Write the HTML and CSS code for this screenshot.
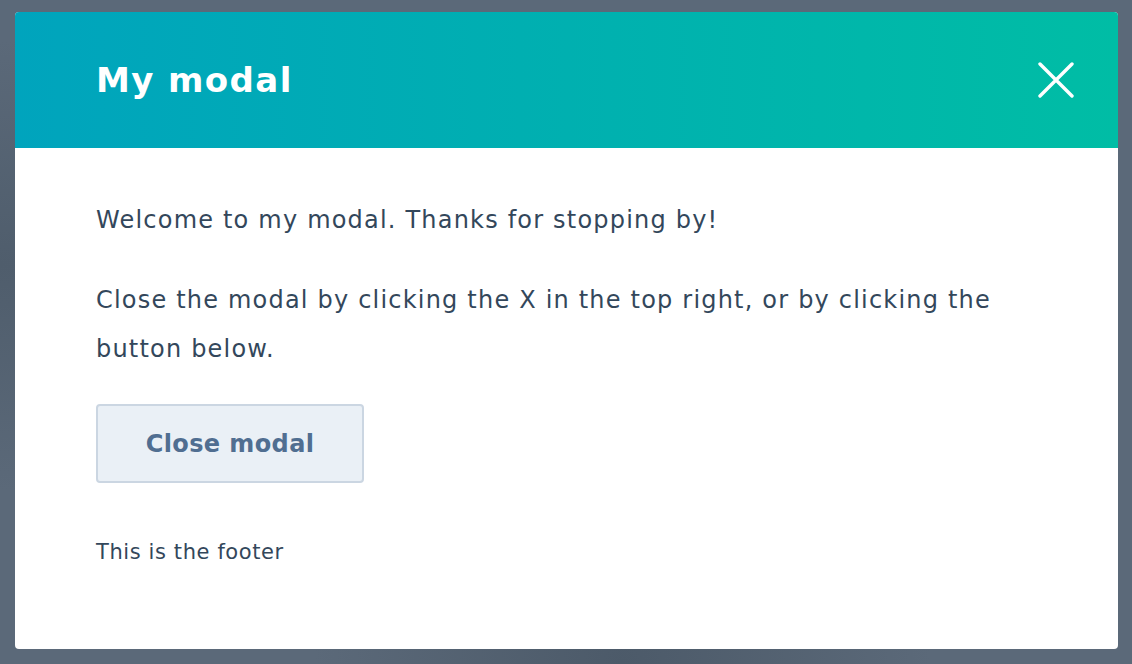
FILE: index.html
```html
<!DOCTYPE html>
<html lang="en">
<head>
<meta charset="utf-8">
<title>My modal</title>
<link rel="stylesheet" href="styles.css">
</head>
<body>
<div class="backdrop">
  <div class="modal">
    <div class="modal-header">
      <h1 class="modal-title">My modal</h1>
      <button class="modal-close" aria-label="Close">
        <svg width="36" height="36" viewBox="0 0 36 36"><path d="M2 2 L34 34 M34 2 L2 34" stroke="#fff" stroke-width="3.4" stroke-linecap="round" fill="none"/></svg>
      </button>
    </div>
    <div class="modal-body">
      <p class="text">Welcome to my modal. Thanks for stopping by!</p>
      <p class="text">Close the modal by clicking the X in the top right, or by clicking the button below.</p>
      <button class="btn-secondary">Close modal</button>
    </div>
    <div class="modal-footer">
      <p class="footer-text">This is the footer</p>
    </div>
  </div>
</div>
</body>
</html>
```
FILE: styles.css
```css
html, body {
  margin: 0;
  padding: 0;
  height: 100%;
}
body {
  background: #5b6979;
  font-family: "DejaVu Sans", "Noto Sans", sans-serif;
  color: #33475b;
}
.backdrop {
  width: 1132px;
  height: 664px;
  box-sizing: border-box;
  padding: 12px 14px 15px 15px;
  background:
    radial-gradient(ellipse at 0% 40%, #4f5d6c 0%, rgba(79,93,108,0) 40%),
    radial-gradient(ellipse at 55% 100%, #4c5a69 0%, rgba(76,90,105,0) 35%),
    #5b6979;
}
.modal {
  height: 100%;
  background: #fff;
  border-radius: 4px;
  overflow: hidden;
  display: flex;
  flex-direction: column;
}
.modal-header {
  height: 136px;
  flex: none;
  display: flex;
  align-items: center;
  justify-content: space-between;
  padding: 0 44px 0 81px;
  background: linear-gradient(90deg, #00a4bd 0%, #00b0b0 50%, #00bda5 100%);
}
.modal-title {
  margin: 0;
  color: #fff;
  font-weight: 700;
  font-size: 34px;
  letter-spacing: 1.4px;
}
.modal-close {
  background: none;
  border: 0;
  padding: 0;
  width: 36px;
  height: 36px;
  display: flex;
}
.modal-body {
  padding: 48px 81px 0 81px;
  display: flex;
  flex-direction: column;
  align-items: flex-start;
}
.text {
  margin: 0 0 31px 0;
  font-size: 24px;
  line-height: 49px;
  letter-spacing: 1.2px;
}
.text + .text {
  margin-bottom: 30px;
}
.btn-secondary {
  width: 268px;
  height: 79px;
  background: #eaf0f6;
  border: 2px solid #cbd6e2;
  border-radius: 4px;
  color: #506e91;
  font-family: inherit;
  font-weight: 700;
  font-size: 24px;
  letter-spacing: 0.4px;
}
.modal-footer {
  padding: 52px 81px 0 81px;
}
.footer-text {
  margin: 0;
  font-size: 21px;
  line-height: 34px;
  letter-spacing: 0.6px;
}
```
